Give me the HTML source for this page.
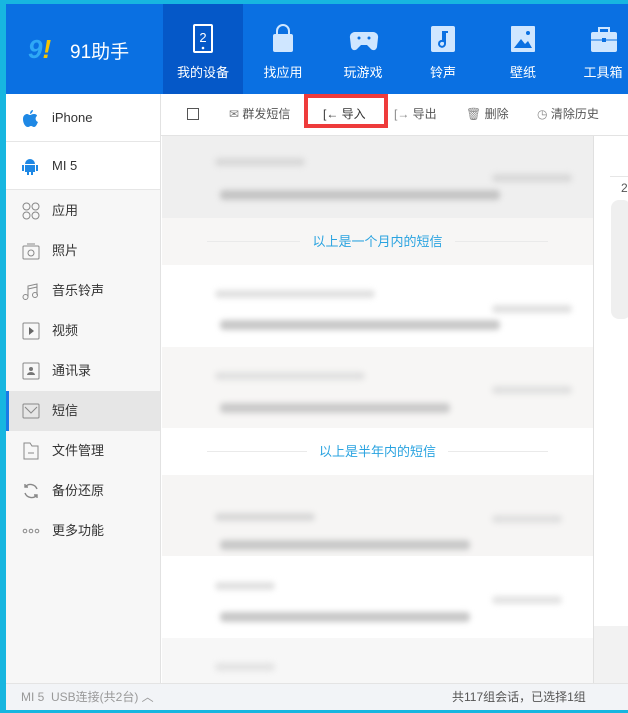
<!DOCTYPE html>
<html><head><meta charset="utf-8"><style>
*{margin:0;padding:0;box-sizing:border-box}
body{width:628px;height:713px;overflow:hidden;background:#17b6e0;font-family:"Liberation Sans","Noto Sans CJK SC",sans-serif;position:relative}
.abs{position:absolute}
#hdr{left:6px;top:4px;width:622px;height:90px;background:#0a70e2}
.tab{position:absolute;top:0;width:80px;height:90px;color:#fff;font-size:13px;text-align:center}
.tab span{position:absolute;left:0;right:0;top:58px}
.tab svg{position:absolute;left:26px;top:20px}
#side{left:6px;top:94px;width:155px;height:589px;background:#f7f7f7;border-right:1px solid #e2e2e2}
.si{position:absolute;left:0;width:154px;height:40px;font-size:13px;color:#333;line-height:40px;padding-left:46px}
.si svg{position:absolute;left:16px;top:11px}
#tb{left:161px;top:94px;width:467px;height:42px;background:#fff;border-bottom:1px solid #e3e3e3;font-size:12px;color:#555}
.tbi{position:absolute;top:0;line-height:40px}
.row{position:absolute;left:162px;width:431px}
.bl{position:absolute;background:#c9c9c9;filter:blur(3px);border-radius:4px}
.div{position:absolute;left:162px;width:431px;height:47px;text-align:center;font-size:13px;color:#2aa3e0;line-height:47px}
.div:before{content:"";position:absolute;left:45px;right:45px;top:23px;border-top:1px solid #eaeaea;z-index:0}
.div span{position:relative;background:inherit;padding:0 12px;z-index:1}
</style></head><body>
<div class="abs" style="left:161px;top:94px;width:467px;height:590px;background:#fff"></div>
<div id="hdr" class="abs">
 <div class="abs" style="left:22px;top:30px;font-size:26px;font-weight:bold;color:#2fa8f5;font-style:italic">9<span style="color:#f5c400">!</span></div>
 <div class="abs" style="left:64px;top:33px;font-size:19px;color:#fff">91助手</div>
 <div class="tab" style="left:157px;background:#0558c8"><svg width="28" height="30" viewBox="0 0 28 30"><rect x="5" y="1" width="18" height="27" rx="1" fill="none" stroke="#fff" stroke-width="2"/><text x="14" y="18" font-size="13" fill="#fff" text-anchor="middle" font-family="Liberation Sans">2</text><circle cx="14" cy="24" r="1.3" fill="#fff"/></svg><span>我的设备</span></div>
 <div class="tab" style="left:237px"><svg width="28" height="30"><path d="M8 10V7a6 6 0 0 1 12 0v3" fill="none" stroke="#cfe6ff" stroke-width="2"/><rect x="4" y="10" width="20" height="18" rx="2" fill="#cfe6ff"/></svg><span>找应用</span></div>
 <div class="tab" style="left:317px"><svg width="30" height="30"><path d="M6 8h18a5 5 0 0 1 5 6l-1 9c-1 4-5 4-7 1l-3-3h-6l-3 3c-2 3-6 3-7-1l-1-9a5 5 0 0 1 5-6z" fill="#cfe6ff"/><circle cx="10" cy="14" r="1.5" fill="#0a70e2"/><circle cx="20" cy="14" r="1.5" fill="#0a70e2"/></svg><span>玩游戏</span></div>
 <div class="tab" style="left:397px"><svg width="28" height="30"><rect x="2" y="2" width="24" height="26" rx="2" fill="#cfe6ff"/><path d="M16 8v12a3 3 0 1 1-2-3V8h5" fill="none" stroke="#0a70e2" stroke-width="2"/></svg><span>铃声</span></div>
 <div class="tab" style="left:477px"><svg width="28" height="30"><rect x="2" y="2" width="24" height="26" rx="1" fill="#cfe6ff"/><path d="M5 24l7-9 4 5 3-3 4 7z" fill="#0a70e2"/><circle cx="19" cy="9" r="2" fill="#0a70e2"/></svg><span>壁纸</span></div>
 <div class="tab" style="left:557px"><svg width="30" height="30"><path d="M10 8V4h10v4" fill="none" stroke="#cfe6ff" stroke-width="2"/><rect x="2" y="8" width="26" height="20" rx="2" fill="#cfe6ff"/><path d="M2 16h26" stroke="#0a70e2"/><rect x="13" y="14" width="4" height="4" fill="#0a70e2"/></svg><span>工具箱</span></div>
</div>
<div id="side" class="abs">
 <div class="si" style="top:0;height:48px;line-height:48px;background:#fff;border-bottom:1px solid #e6e6e6"><svg width="16" height="18" style="top:15px"><path d="M11 1c0 2-2 4-3 4 0-2 1-4 3-4zM8 6c1 0 2-1 4-1s3 1 3 2c-2 1-2 5 1 6-1 2-2 5-4 5-1 0-2-1-3-1s-2 1-3 1C3 18 1 14 1 10s3-5 4-5 2 1 3 1z" fill="#1e88e5"/></svg>iPhone</div>
 <div class="si" style="top:48px;height:48px;line-height:48px;background:#fff;border-bottom:1px solid #e6e6e6"><svg width="16" height="18" style="top:15px"><path d="M3 7a5 5 0 0 1 10 0z" fill="#1e88e5"/><rect x="3" y="8" width="10" height="7" fill="#1e88e5"/><rect x="0" y="8" width="2" height="6" fill="#1e88e5"/><rect x="14" y="8" width="2" height="6" fill="#1e88e5"/><rect x="5" y="14" width="2" height="4" fill="#1e88e5"/><rect x="9" y="14" width="2" height="4" fill="#1e88e5"/></svg>MI 5</div>
 <div class="si" style="top:97px"><svg width="18" height="18"><g fill="none" stroke="#888"><circle cx="4.5" cy="4.5" r="3.5"/><circle cx="13.5" cy="4.5" r="3.5"/><circle cx="4.5" cy="13.5" r="3.5"/><circle cx="13.5" cy="13.5" r="3.5"/></g></svg>应用</div>
 <div class="si" style="top:137px"><svg width="18" height="18"><g fill="none" stroke="#888"><rect x="1" y="4" width="16" height="13" rx="1"/><circle cx="9" cy="11" r="3"/><path d="M5 2h8"/></g></svg>照片</div>
 <div class="si" style="top:177px"><svg width="18" height="18"><g fill="none" stroke="#888"><circle cx="3.5" cy="15" r="2.5"/><circle cx="13" cy="13" r="2.5"/><path d="M6 15V4l9-2v11M6 7l9-2"/></g></svg>音乐铃声</div>
 <div class="si" style="top:217px"><svg width="18" height="18"><rect x="1" y="1" width="16" height="16" rx="1" fill="none" stroke="#888"/><path d="M7 5l5 4-5 4z" fill="#666"/></svg>视频</div>
 <div class="si" style="top:257px"><svg width="18" height="18"><rect x="1" y="1" width="16" height="16" rx="1" fill="none" stroke="#888"/><circle cx="9" cy="7" r="2" fill="#777"/><path d="M5 13a4 3 0 0 1 8 0z" fill="#777"/></svg>通讯录</div>
 <div class="si" style="top:297px;background:#e6e6e6;border-left:3px solid #1a7ae6;padding-left:43px"><svg width="18" height="18" style="left:13px"><rect x="1" y="2" width="16" height="14" rx="1" fill="none" stroke="#888"/><path d="M3 5l6 6 6-6" fill="none" stroke="#888"/></svg>短信</div>
 <div class="si" style="top:337px"><svg width="18" height="18"><path d="M2 1h6l2 3h6v13H2z" fill="none" stroke="#888"/><path d="M6 11h6" stroke="#888"/></svg>文件管理</div>
 <div class="si" style="top:377px"><svg width="18" height="18"><g fill="none" stroke="#888" stroke-width="1.4"><path d="M15 7a7 7 0 0 0-12-2M3 11a7 7 0 0 0 12 2"/><path d="M3 2v3h3M15 16v-3h-3"/></g></svg>备份还原</div>
 <div class="si" style="top:417px"><svg width="18" height="18"><g fill="none" stroke="#888"><circle cx="3" cy="9" r="1.8"/><circle cx="9" cy="9" r="1.8"/><circle cx="15" cy="9" r="1.8"/></g></svg>更多功能</div>
</div>
<div id="tb" class="abs">
 <div class="abs" style="left:26px;top:14px;width:12px;height:12px;border:1px solid #555"></div>
 <div class="tbi" style="left:68px"><span style="color:#777">✉</span> 群发短信</div>
 <div class="abs" style="left:143px;top:0;width:84px;height:34px;border:4px solid #ee3b3b"></div>
 <div class="tbi" style="left:162px;color:#333;line-height:40px">[← 导入</div>
 <div class="tbi" style="left:233px;color:#888">[→ <span style="color:#555">导出</span></div>
 <div class="tbi" style="left:305px"><span style="color:#888">🗑</span> 删除</div>
 <div class="tbi" style="left:376px"><span style="color:#888">◷</span> 清除历史</div>
</div>
<div class="row" style="top:136px;height:82px;background:#efefef"></div>
<div class="div" style="top:218px;background:#f7f6f5"><span>以上是一个月内的短信</span></div>
<div class="row" style="top:265px;height:82px;background:#fff"></div>
<div class="row" style="top:347px;height:81px;background:#f7f6f5"></div>
<div class="div" style="top:428px;background:#fff"><span>以上是半年内的短信</span></div>
<div class="row" style="top:475px;height:81px;background:#f6f5f4"></div>
<div class="row" style="top:556px;height:82px;background:#fff"></div>
<div class="row" style="top:638px;height:45px;background:#f7f7f7"></div>
<div class="bl" style="left:215px;top:158px;width:90px;height:8px;background:#d8d8d8"></div>
<div class="bl" style="left:220px;top:190px;width:280px;height:10px;background:#c4c4c4"></div>
<div class="bl" style="left:492px;top:174px;width:80px;height:8px;background:#d8d8d8"></div>
<div class="bl" style="left:215px;top:290px;width:160px;height:8px;background:#e0e0e0"></div>
<div class="bl" style="left:220px;top:320px;width:280px;height:10px;background:#c8c8c8"></div>
<div class="bl" style="left:492px;top:305px;width:80px;height:8px;background:#e0e0e0"></div>
<div class="bl" style="left:215px;top:372px;width:150px;height:8px;background:#e0e0e0"></div>
<div class="bl" style="left:220px;top:403px;width:230px;height:10px;background:#cacaca"></div>
<div class="bl" style="left:492px;top:386px;width:80px;height:8px;background:#e0e0e0"></div>
<div class="bl" style="left:215px;top:513px;width:100px;height:8px;background:#d8d8d8"></div>
<div class="bl" style="left:220px;top:540px;width:250px;height:10px;background:#c8c8c8"></div>
<div class="bl" style="left:492px;top:515px;width:70px;height:8px;background:#e0e0e0"></div>
<div class="bl" style="left:215px;top:582px;width:60px;height:8px;background:#e0e0e0"></div>
<div class="bl" style="left:220px;top:612px;width:250px;height:10px;background:#c8c8c8"></div>
<div class="bl" style="left:492px;top:596px;width:70px;height:8px;background:#e3e3e3"></div>
<div class="bl" style="left:215px;top:663px;width:60px;height:8px;background:#e3e3e3"></div>
<div class="abs" style="left:593px;top:136px;width:35px;height:490px;background:#fff;border-left:1px solid #e0e0e0"></div>
<div class="abs" style="left:593px;top:626px;width:35px;height:57px;background:#f2f2f2;border-left:1px solid #e0e0e0"></div>
<div class="abs" style="left:610px;top:176px;width:18px;border-top:1px solid #e6e6e6"></div>
<div class="abs" style="left:621px;top:181px;font-size:12px;color:#555">2</div>
<div class="abs" style="left:611px;top:200px;width:20px;height:119px;background:#efefef;border-radius:8px"></div>
<div class="abs" style="left:6px;top:683px;width:622px;height:27px;background:#f2f4f7;border-top:1px solid #e4e4e4;font-size:12px;color:#999;line-height:26px">
 <span style="position:absolute;left:15px">MI 5 &nbsp;USB连接(共2台) ︿</span>
 <span style="position:absolute;left:446px;color:#555">共117组会话，已选择1组</span>
</div>
</body></html>
